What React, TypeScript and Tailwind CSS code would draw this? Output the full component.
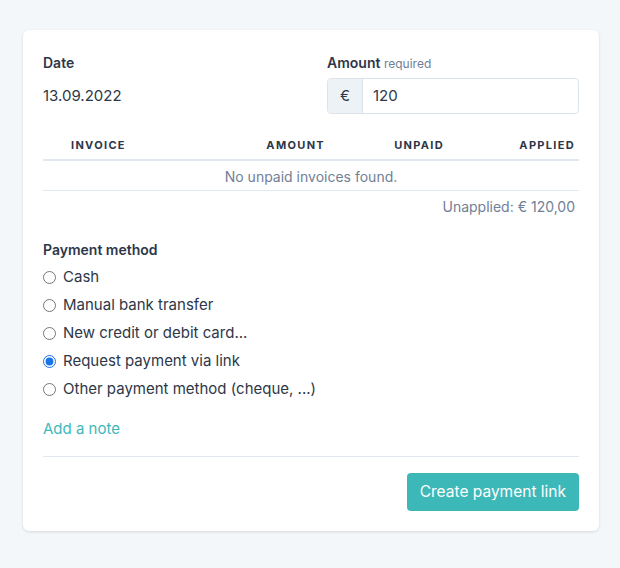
import React, { useState } from 'react';

const methods = [
  'Cash',
  'Manual bank transfer',
  'New credit or debit card...',
  'Request payment via link',
  'Other payment method (cheque, ...)',
];

const App: React.FC = () => {
  const [method, setMethod] = useState(3);
  const [amount, setAmount] = useState('120');

  return (
    <div
      className="min-h-[568px] bg-[#f4f7fa] pl-[23px] pt-[30px] text-[#2d3748]"
      style={{ fontFamily: 'Inter, "Noto Sans", sans-serif' }}
    >
      <div className="w-[576px] rounded-md bg-white px-5 pt-[23px] pb-5 shadow-[0_1px_3px_rgba(0,0,0,0.12)]">
        {/* Date / amount */}
        <div className="grid grid-cols-2 gap-8">
          <div>
            <div className="text-[14px] font-semibold leading-5">Date</div>
            <div className="mt-[4px] flex h-9 items-center pt-[2px] text-[15px]">13.09.2022</div>
          </div>
          <div>
            <div className="text-[14px] font-semibold leading-5">
              Amount <span className="text-[12px] font-normal text-[#718096]">required</span>
            </div>
            <div className="mt-[4px] flex h-9 overflow-hidden rounded border border-[#dde3ea]">
              <span className="flex w-[35px] shrink-0 items-center justify-center border-r border-[#dde3ea] bg-[#edf2f7] text-[15px]">
                €
              </span>
              <input
                value={amount}
                onChange={(e) => setAmount(e.target.value)}
                className="min-w-0 flex-1 px-[10px] text-[15px] outline-none"
              />
            </div>
          </div>
        </div>

        {/* Invoices */}
        <div className="mt-[15px]">
          <div className="grid grid-cols-[157px_125px_119px_135px] border-b-2 border-[#e2e8f0] pt-2 pb-[6px] text-[11px] font-bold leading-4 tracking-[0.12em]">
            <span className="pl-7">INVOICE</span>
            <span className="text-right">AMOUNT</span>
            <span className="text-right">UNPAID</span>
            <span className="pr-1 text-right">APPLIED</span>
          </div>
          <div className="border-b border-[#e2e8f0] pt-[7px] pb-[4px] text-center text-[14px] leading-[18px] text-[#718096]">
            No unpaid invoices found.
          </div>
          <div className="pt-[7px] pr-1 text-right text-[14px] leading-[17px] text-[#718096]">
            Unapplied: € 120,00
          </div>
        </div>

        {/* Payment method */}
        <div className="mt-[25px]">
          <div className="text-[14px] font-semibold leading-5">Payment method</div>
          <div className="mt-[3px] flex flex-col">
            {methods.map((m, i) => (
              <label key={m} className="flex h-7 items-center gap-[7px] text-[15px]">
                <input
                  type="radio"
                  name="method"
                  checked={method === i}
                  onChange={() => setMethod(i)}
                  className="h-[13px] w-[13px] accent-[#1a73e8]"
                />
                {m}
              </label>
            ))}
          </div>
        </div>

        <div className="mt-[16px] text-[15px] leading-5 text-[#3db8b9]">Add a note</div>

        <div className="mt-[17px] border-t border-[#e2e8f0]" />

        <div className="mt-4 flex justify-end">
          <button className="h-[38px] rounded bg-[#3db8b9] px-[13px] text-[15.5px] text-white">
            Create payment link
          </button>
        </div>
      </div>
    </div>
  );
};

export default App;
